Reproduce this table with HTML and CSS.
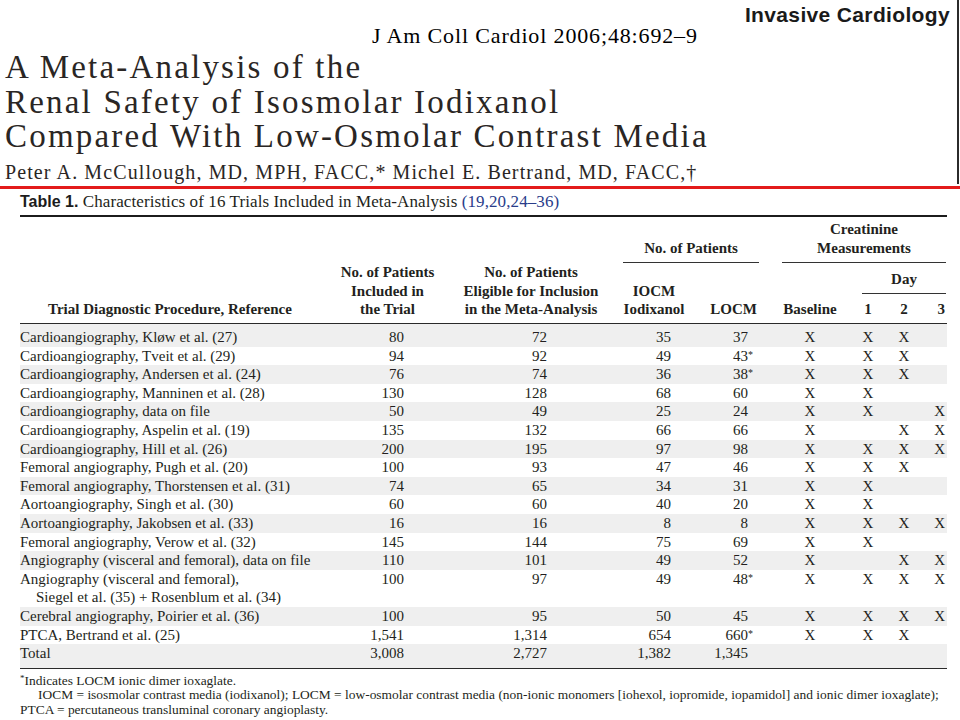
FILE: index.html
```html
<!DOCTYPE html>
<html lang="en">
<head>
<meta charset="utf-8">
<title>Renal Safety of Isosmolar Iodixanol</title>
<link rel="stylesheet" href="styles.css">
</head>
<body>
<header class="masthead">
  <div class="topline">
    <span class="cite">J Am Coll Cardiol 2006;48:692–9</span>
    <span class="brand">Invasive Cardiology</span>
  </div>
  <h1 class="title">A Meta-Analysis of the<br>Renal Safety of Isosmolar Iodixanol<br>Compared With Low-Osmolar Contrast Media</h1>
  <p class="authors">Peter A. McCullough, MD, MPH, FACC,* Michel E. Bertrand, MD, FACC,†</p>
</header>
<div class="redbar"></div>
<main class="content">
  <div class="caption"><span class="tlabel">Table 1.</span> Characteristics of 16 Trials Included in Meta-Analysis <span class="refs">(19,20,24–36)</span></div>
  <table class="trials">
    <colgroup>
      <col class="w-trial"><col class="w-inc"><col class="w-elig"><col class="w-iocm"><col class="w-locm"><col class="w-base"><col class="w-d1"><col class="w-d2"><col class="w-d3">
    </colgroup>
    <thead>
      <tr class="h1">
        <th rowspan="3" class="hl">Trial Diagnostic Procedure, Reference</th>
        <th rowspan="3" class="hc">No. of Patients<br>Included in<br>the Trial</th>
        <th rowspan="3" class="hc">No. of Patients<br>Eligible for Inclusion<br>in the Meta-Analysis</th>
        <th colspan="2" class="grp"><div class="rule r-pat">No. of Patients</div></th>
        <th colspan="4" class="grp"><div class="rule r-cre">Creatinine<br>Measurements</div></th>
      </tr>
      <tr class="h2">
        <th rowspan="2" class="hc h-iocm">IOCM<br>Iodixanol</th>
        <th rowspan="2" class="hr h-locm">LOCM</th>
        <th rowspan="2" class="hc">Baseline</th>
        <th colspan="3" class="grp"><div class="rule r-day">Day</div></th>
      </tr>
      <tr class="h3">
        <th class="hc">1</th>
        <th class="hc">2</th>
        <th class="hd3">3</th>
      </tr>
    </thead>
    <tbody>
      <tr><td>Cardioangiography, Kløw et al. (27)</td><td class="n inc">80</td><td class="n elig">72</td><td class="n iocm">35</td><td class="n locm">37</td><td class="x">X</td><td class="x">X</td><td class="x">X</td><td class="x3"></td></tr>
      <tr><td>Cardioangiography, Tveit et al. (29)</td><td class="n inc">94</td><td class="n elig">92</td><td class="n iocm">49</td><td class="n locm">43<span class="ast">*</span></td><td class="x">X</td><td class="x">X</td><td class="x">X</td><td class="x3"></td></tr>
      <tr><td>Cardioangiography, Andersen et al. (24)</td><td class="n inc">76</td><td class="n elig">74</td><td class="n iocm">36</td><td class="n locm">38<span class="ast">*</span></td><td class="x">X</td><td class="x">X</td><td class="x">X</td><td class="x3"></td></tr>
      <tr><td>Cardioangiography, Manninen et al. (28)</td><td class="n inc">130</td><td class="n elig">128</td><td class="n iocm">68</td><td class="n locm">60</td><td class="x">X</td><td class="x">X</td><td class="x"></td><td class="x3"></td></tr>
      <tr><td>Cardioangiography, data on file</td><td class="n inc">50</td><td class="n elig">49</td><td class="n iocm">25</td><td class="n locm">24</td><td class="x">X</td><td class="x">X</td><td class="x"></td><td class="x3">X</td></tr>
      <tr><td>Cardioangiography, Aspelin et al. (19)</td><td class="n inc">135</td><td class="n elig">132</td><td class="n iocm">66</td><td class="n locm">66</td><td class="x">X</td><td class="x"></td><td class="x">X</td><td class="x3">X</td></tr>
      <tr><td>Cardioangiography, Hill et al. (26)</td><td class="n inc">200</td><td class="n elig">195</td><td class="n iocm">97</td><td class="n locm">98</td><td class="x">X</td><td class="x">X</td><td class="x">X</td><td class="x3">X</td></tr>
      <tr><td>Femoral angiography, Pugh et al. (20)</td><td class="n inc">100</td><td class="n elig">93</td><td class="n iocm">47</td><td class="n locm">46</td><td class="x">X</td><td class="x">X</td><td class="x">X</td><td class="x3"></td></tr>
      <tr><td>Femoral angiography, Thorstensen et al. (31)</td><td class="n inc">74</td><td class="n elig">65</td><td class="n iocm">34</td><td class="n locm">31</td><td class="x">X</td><td class="x">X</td><td class="x"></td><td class="x3"></td></tr>
      <tr><td>Aortoangiography, Singh et al. (30)</td><td class="n inc">60</td><td class="n elig">60</td><td class="n iocm">40</td><td class="n locm">20</td><td class="x">X</td><td class="x">X</td><td class="x"></td><td class="x3"></td></tr>
      <tr><td>Aortoangiography, Jakobsen et al. (33)</td><td class="n inc">16</td><td class="n elig">16</td><td class="n iocm">8</td><td class="n locm">8</td><td class="x">X</td><td class="x">X</td><td class="x">X</td><td class="x3">X</td></tr>
      <tr><td>Femoral angiography, Verow et al. (32)</td><td class="n inc">145</td><td class="n elig">144</td><td class="n iocm">75</td><td class="n locm">69</td><td class="x">X</td><td class="x">X</td><td class="x"></td><td class="x3"></td></tr>
      <tr><td>Angiography (visceral and femoral), data on file</td><td class="n inc">110</td><td class="n elig">101</td><td class="n iocm">49</td><td class="n locm">52</td><td class="x">X</td><td class="x"></td><td class="x">X</td><td class="x3">X</td></tr>
      <tr><td>Angiography (visceral and femoral),<br><span class="indent">Siegel et al. (35) + Rosenblum et al. (34)</span></td><td class="n inc">100</td><td class="n elig">97</td><td class="n iocm">49</td><td class="n locm">48<span class="ast">*</span></td><td class="x">X</td><td class="x">X</td><td class="x">X</td><td class="x3">X</td></tr>
      <tr><td>Cerebral angiography, Poirier et al. (36)</td><td class="n inc">100</td><td class="n elig">95</td><td class="n iocm">50</td><td class="n locm">45</td><td class="x">X</td><td class="x">X</td><td class="x">X</td><td class="x3">X</td></tr>
      <tr><td>PTCA, Bertrand et al. (25)</td><td class="n inc">1,541</td><td class="n elig">1,314</td><td class="n iocm">654</td><td class="n locm">660<span class="ast">*</span></td><td class="x">X</td><td class="x">X</td><td class="x">X</td><td class="x3"></td></tr>
      <tr class="total"><td>Total</td><td class="n inc">3,008</td><td class="n elig">2,727</td><td class="n iocm">1,382</td><td class="n locm">1,345</td><td class="x"></td><td class="x"></td><td class="x"></td><td class="x3"></td></tr>
    </tbody>
  </table>
  <div class="notes">
    <p class="note"><span class="nast">*</span>Indicates LOCM ionic dimer ioxaglate.</p>
    <p class="note ind">IOCM = isosmolar contrast media (iodixanol); LOCM = low-osmolar contrast media (non-ionic monomers [iohexol, iopromide, iopamidol] and ionic dimer ioxaglate);</p>
    <p class="note">PTCA = percutaneous transluminal coronary angioplasty.</p>
  </div>
</main>
</body>
</html>
```
FILE: styles.css
```css
html, body {
  margin: 0;
  padding: 0;
  background: #ffffff;
}
body {
  width: 960px;
  height: 720px;
  overflow: hidden;
  font-family: "Liberation Serif", "Times New Roman", serif;
  color: #231f20;
}

/* ---------- masthead ---------- */
.masthead {
  width: 952px;
  height: 184px;
  padding-left: 5px;
  border-right: 2px solid #2b2b2b;
}
.topline {
  display: flex;
  align-items: flex-start;
  height: 50px;
}
.cite {
  margin-left: 367px;
  margin-top: 24px;
  font-size: 22px;
  line-height: 24px;
  letter-spacing: 0.85px;
  color: #000;
  white-space: nowrap;
}
.brand {
  margin-left: auto;
  margin-right: 7px;
  margin-top: 3px;
  font-family: "Liberation Sans", Arial, sans-serif;
  font-weight: bold;
  font-size: 21px;
  line-height: 24px;
  letter-spacing: 0.35px;
  color: #1a1a1a;
  white-space: nowrap;
}
.title {
  margin: 0;
  font-weight: normal;
  font-size: 33px;
  line-height: 34.5px;
  letter-spacing: 2.2px;
  color: #2a2624;
  white-space: nowrap;
}
.authors {
  margin: 6px 0 0 0;
  font-size: 20px;
  line-height: 24px;
  letter-spacing: 1.1px;
  color: #2a2624;
  white-space: nowrap;
}
.redbar {
  height: 3px;
  margin-top: 2px;
  background: #e31b1b;
}

/* ---------- table ---------- */
.content {
  padding: 0 13px 0 20px;
}
.caption {
  margin-top: 3px;
  padding-bottom: 3px;
  border-bottom: 2px solid #1c1c1c;
  font-size: 17px;
  line-height: 20px;
  letter-spacing: 0.1px;
  white-space: nowrap;
}
.tlabel {
  font-family: "Liberation Sans", Arial, sans-serif;
  font-weight: bold;
  font-size: 16px;
  letter-spacing: 0;
  color: #1c1c1c;
}
.refs {
  color: #2a3c8a;
}
.trials {
  width: 927px;
  border-collapse: collapse;
  table-layout: fixed;
  font-size: 15px;
}
.w-trial { width: 315px; }
.w-inc { width: 105px; }
.w-elig { width: 182px; }
.w-iocm { width: 68px; }
.w-locm { width: 80px; }
.w-base { width: 80px; }
.w-d1 { width: 36px; }
.w-d2 { width: 36px; }
.w-d3 { width: 25px; }

.trials th {
  padding: 0 0 4px 0;
  font-weight: bold;
  line-height: 18.5px;
  vertical-align: bottom;
  color: #231f20;
  white-space: nowrap;
}
.trials .h1 th.grp { padding-bottom: 0; }
.trials .h2 th.grp { padding-bottom: 0; }
.trials .h1 { height: 46px; }
.trials .h2 { height: 31px; }
.trials .h3 { height: 29px; }
.hl { text-align: left; padding-left: 28px !important; }
.hc { text-align: center; }
.hr { text-align: right; }
.trials th.h-iocm { padding-right: 4px; }
.trials th.h-locm { padding-right: 13px; }
.hd3 { text-align: right; padding-right: 2px !important; }
.rule {
  border-bottom: 1.5px solid #333;
  text-align: center;
  padding-bottom: 5px;
}
.r-pat { margin: 0 11px 0 1px; }
.r-cre { margin: 0 1px 0 12px; }
.r-day { margin: 0 1px 0 12px; }

.trials td {
  padding: 0;
  line-height: 18.6px;
  vertical-align: top;
  white-space: nowrap;
}
.trials tbody tr:nth-child(odd) td { background: #efefef; }
.trials tbody tr:first-child td { border-top: 1.5px solid #2a2a2a; padding-top: 4.5px; }
.trials tbody tr:last-child td { border-bottom: 1.5px solid #2a2a2a; padding-bottom: 5px; }
.n { text-align: right; }
.inc { padding-right: 36px !important; }
.elig { padding-right: 75px !important; }
.iocm { padding-right: 19px !important; }
.locm { padding-right: 22px !important; }
.ast { font-size: 10px; vertical-align: 3px; line-height: 0; margin-right: -5px; }
.x { text-align: center; }
.x3 { text-align: right; padding-right: 2px !important; }
.indent { padding-left: 16px; }

/* ---------- footnotes ---------- */
.notes {
  padding-top: 5px;
}
.note {
  margin: 0;
  font-size: 13.45px;
  line-height: 14.7px;
  white-space: nowrap;
}
.note.ind { padding-left: 18px; }
.nast { font-size: 9px; vertical-align: 4px; line-height: 0; }
```
